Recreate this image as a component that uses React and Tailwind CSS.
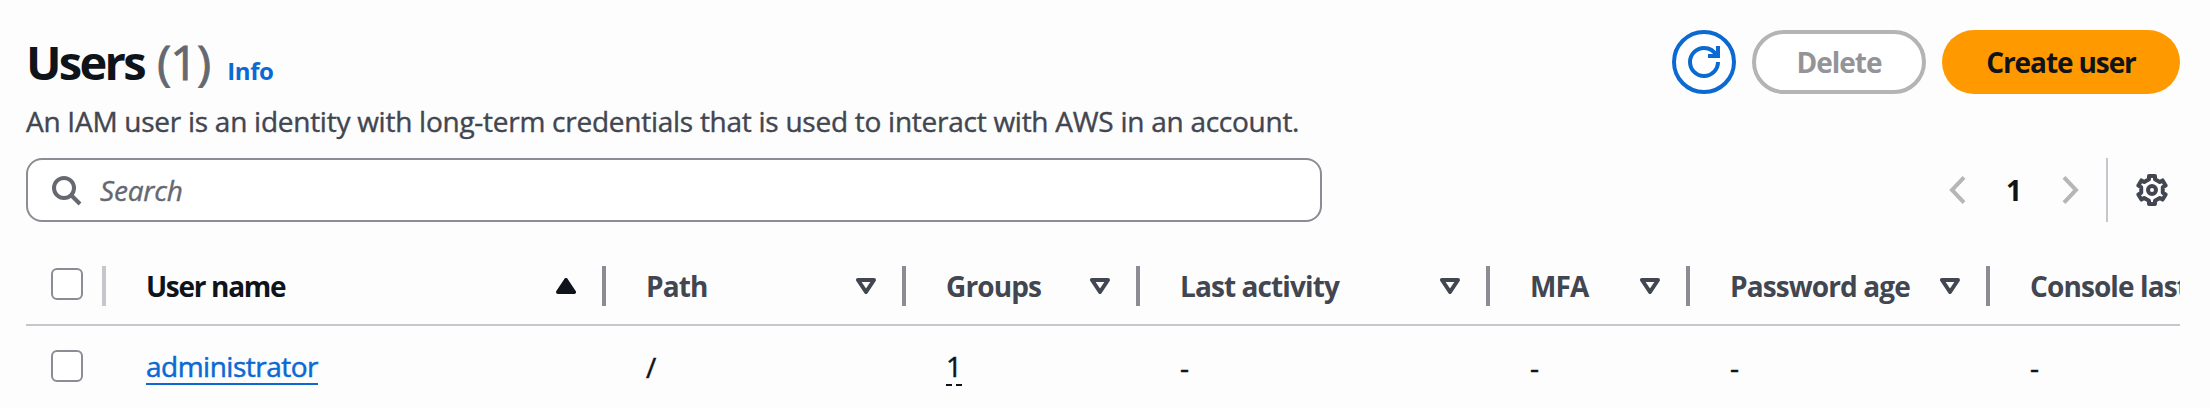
const sans = "font-['Open_Sans','Noto_Sans',sans-serif]";

const columns = [
  { label: 'User name', width: 'w-[500px]', sorted: true, value: 'administrator', kind: 'link' },
  { label: 'Path', width: 'w-[300px]', value: '/' },
  { label: 'Groups', width: 'w-[234px]', value: '1', kind: 'popover' },
  { label: 'Last activity', width: 'w-[350px]', value: '-' },
  { label: 'MFA', width: 'w-[200px]', value: '-' },
  { label: 'Password age', width: 'w-[300px]', value: '-' },
  { label: 'Console last', width: 'w-[400px]', value: '-' },
];

function RefreshIcon() {
  return (
    <svg width="32" height="32" viewBox="0 0 16 16" fill="none" stroke="currentColor" strokeWidth="2">
      <path d="M15 8c0 3.87-3.13 7-7 7s-7-3.13-7-7 3.13-7 7-7c2.79 0 5.2 1.63 6.33 4" />
      <path d="M15 0v5h-5" />
    </svg>
  );
}

function SearchIcon() {
  return (
    <svg width="32" height="32" viewBox="0 0 16 16" fill="none" stroke="currentColor" strokeWidth="2">
      <circle cx="7" cy="7" r="5" />
      <path d="m15 15-4.5-4.5" />
    </svg>
  );
}

function GearIcon() {
  return (
    <svg width="32" height="32" viewBox="0 0 16 16" fill="none" stroke="currentColor" strokeWidth="2" strokeLinejoin="round">
      <path d="M6.5 1h3v1.6l2.4 1.4 1.4-.8 1.5 2.6-1.4.8v2.8l1.4.8-1.5 2.6-1.4-.8-2.4 1.4V15h-3v-1.6L4.1 12l-1.4.8-1.5-2.6 1.4-.8V6.6l-1.4-.8 1.5-2.6 1.4.8 2.4-1.4z" />
      <circle cx="8" cy="8" r="2" />
    </svg>
  );
}

function Chevron({ d }) {
  return (
    <svg width="32" height="32" viewBox="0 0 16 16" fill="none" stroke="#b6b6b8" strokeWidth="2">
      <path d={d} />
    </svg>
  );
}

function SortIcon({ sorted }) {
  return (
    <svg width="20" height="16" viewBox="0 0 20 16" fill={sorted ? 'currentColor' : 'none'} stroke="currentColor" strokeWidth="4" strokeLinejoin="round">
      <path d={sorted ? 'M2 14 10 2l8 12z' : 'M2 2h16l-8 12z'} />
    </svg>
  );
}

function Checkbox() {
  return <span className="block size-8 rounded-md border-2 border-[#8c8c94] bg-white" />;
}

function Value({ kind, value }) {
  if (kind === 'link') {
    return <a className="border-b-2 border-[#0b69d2] leading-[34px] tracking-[-0.5px] text-[#0b69d2]">{value}</a>;
  }
  if (kind === 'popover') {
    return <span className="border-b-2 border-dashed border-[#0f141a] leading-[36px]">{value}</span>;
  }
  return <span className="leading-[36px]">{value}</span>;
}

export default function App() {
  return (
    <div className={`${sans} h-[408px] w-[2210px] overflow-hidden bg-[#fdfdfd] pl-[26px] pr-[30px] pt-[30px] text-[28px] text-[#0f141a]`}>
      <header className="flex h-[71px] items-start justify-between">
        <div className="flex items-baseline">
          <h1 className="text-[47px] font-bold leading-[64px] tracking-[-2.7px]">Users</h1>
          <span className="ml-[13px] text-[48px] leading-[64px] tracking-[-0.8px] text-[#656871] [-webkit-text-stroke:0.9px]">(1)</span>
          <a className="ml-[17px] text-[24px] font-bold tracking-[-0.4px] text-[#0b69d2]">Info</a>
        </div>
        <div className="flex gap-4 font-bold">
          <button className="flex size-16 items-center justify-center rounded-full border-4 border-[#0b69d2] bg-white text-[#0b69d2]">
            <RefreshIcon />
          </button>
          <button className="h-16 w-[174px] rounded-full border-4 border-[#b4b4b7] bg-white tracking-[-1px] text-[#949498]">Delete</button>
          <button className="h-16 w-[238px] rounded-full bg-[#ff9900] tracking-[-1.1px]">Create user</button>
        </div>
      </header>

      <p className="h-[57px] whitespace-nowrap leading-[40px] tracking-[-0.26px] text-[#424650] [-webkit-text-stroke:0.4px]">
        An IAM user is an identity with long-term credentials that is used to interact with AWS in an account.
      </p>

      <div className="flex h-16 items-center justify-between">
        <div className="flex h-16 w-[1296px] items-center rounded-2xl border-2 border-[#8c8c94] bg-white pl-[22px] text-[#656871]">
          <SearchIcon />
          <span className="ml-[18px] italic tracking-[-0.2px] [-webkit-text-stroke:0.4px]">Search</span>
        </div>
        <div className="flex h-16 items-center">
          <Chevron d="M11 1.7 5 8l6 6.3" />
          <span className="w-[80px] text-center font-bold">1</span>
          <Chevron d="m5 1.7 6 6.3-6 6.3" />
          <span className="ml-5 h-16 w-[2px] bg-[#c6c6cd]" />
          <span className="ml-7 mr-3 text-[#424650]">
            <GearIcon />
          </span>
        </div>
      </div>

      <div className="mt-[24px] overflow-hidden">
        <div className="flex h-[80px] w-[2154px] items-center overflow-hidden border-b-2 border-[#c6c6cd] pt-[2px]">
          <div className="flex w-[80px] shrink-0 items-center justify-between pl-[25px]">
            <div className="pb-1">
              <Checkbox />
            </div>
            <span className="h-10 w-1 bg-[#c6c6cd]" />
          </div>
          {columns.map((col) => (
            <div key={col.label} className={`${col.width} flex shrink-0 items-center pl-[40px] font-bold ${col.sorted ? 'tracking-[-1.3px]' : 'tracking-[-0.9px] text-[#424650]'}`}>
              <span className="flex-1 whitespace-nowrap">{col.label}</span>
              <SortIcon sorted={col.sorted} />
              <span className="ml-[26px] h-10 w-1 bg-[#8c8c94]" />
            </div>
          ))}
        </div>
        <div className="flex h-[80px] w-[2154px] items-center overflow-hidden">
          <div className="w-[80px] shrink-0 pl-[25px]">
            <Checkbox />
          </div>
          {columns.map((col) => (
            <div key={col.label} className={`${col.width} flex shrink-0 pl-[40px] pt-[2px] [-webkit-text-stroke:0.5px]`}>
              <Value kind={col.kind} value={col.value} />
            </div>
          ))}
        </div>
      </div>
    </div>
  );
}
